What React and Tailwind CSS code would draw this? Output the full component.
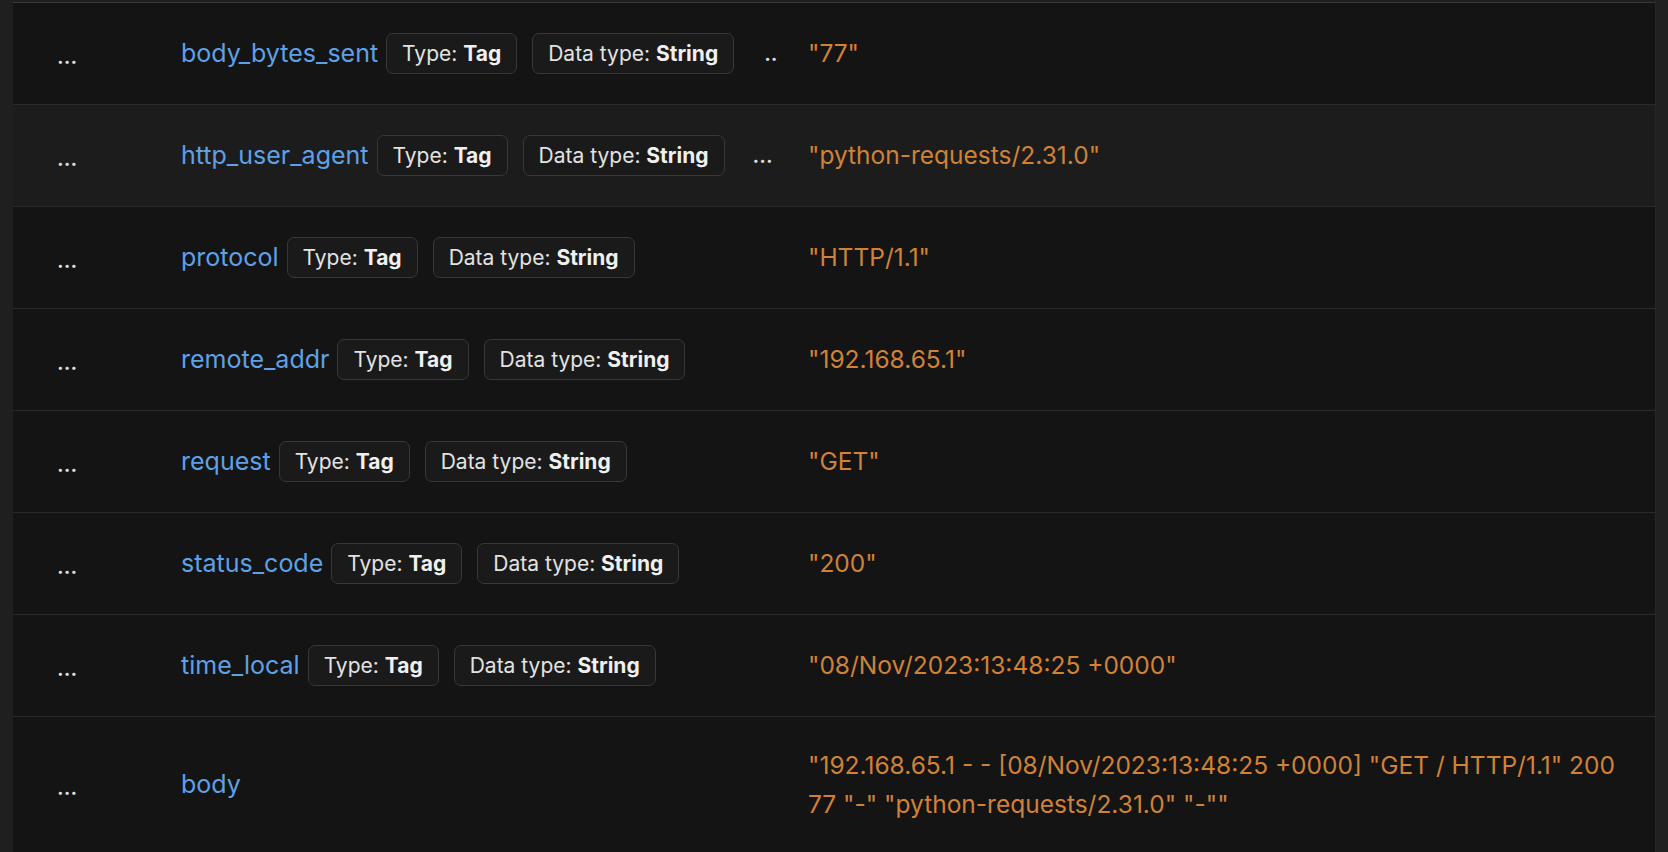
import React from 'react';

const ROWS = [
  { name: 'body_bytes_sent', value: '"77"', more: '..', moreGap: 'ml-[30px]' },
  { name: 'http_user_agent', value: '"python-requests/2.31.0"', more: '...', moreGap: 'ml-[28px]', active: true },
  { name: 'protocol', value: '"HTTP/1.1"' },
  { name: 'remote_addr', value: '"192.168.65.1"' },
  { name: 'request', value: '"GET"' },
  { name: 'status_code', value: '"200"' },
  { name: 'time_local', value: '"08/Nov/2023:13:48:25 +0000"' },
];

const BODY = '"192.168.65.1 - - [08/Nov/2023:13:48:25 +0000] "GET / HTTP/1.1" 200 77 "-" "python-requests/2.31.0" "-""';

const Badge = ({ label, value }) => (
  <span className="inline-flex items-center h-[41px] px-[15px] rounded-[7px] border border-[#383838] bg-[#1a1a1a] text-[21px] text-[#e2e2e2] whitespace-nowrap">
    {label}:&nbsp;<b className="font-bold text-[#f0f0f0]">{value}</b>
  </span>
);

const FieldRow = ({ name, value, more, moreGap, active, badges = true, tall }) => (
  <div
    className={`grid grid-cols-[168px_627px_1fr] items-center border-b border-[#2a2a2a] ${
      active ? 'bg-[#1c1c1c]' : 'bg-[#141414]'
    } ${tall ? 'h-[136px]' : 'h-[102px]'}`}
  >
    <div className="pl-[44px] pt-[6px] text-[21px] font-semibold text-[#dcdcdc]">...</div>
    <div className="flex items-center overflow-hidden whitespace-nowrap">
      <span className="text-[25px] text-[#5ea1e6] mr-[8px]">{name}</span>
      {badges && (
        <>
          <Badge label="Type" value="Tag" />
          <span className="ml-[15px]">
            <Badge label="Data type" value="String" />
          </span>
        </>
      )}
      {more && <span className={`${moreGap} text-[21px] font-semibold text-[#dcdcdc]`}>{more}</span>}
    </div>
    <div className={`pr-[24px] text-[24.5px] leading-[39px] text-[#d08236] ${tall ? 'max-w-[840px]' : ''}`}>{value}</div>
  </div>
);

export default function App() {
  return (
    <div className="flex h-[852px] overflow-hidden bg-[#1f1f1f] font-['Inter','Liberation_Sans',sans-serif]">
      <div className="w-[13px] shrink-0" />
      <div className="flex-1 pt-[2px]">
        <div className="border-t border-[#3a3a3a]">
          {ROWS.map((r) => (
            <FieldRow key={r.name} {...r} />
          ))}
          <FieldRow name="body" value={BODY} badges={false} tall />
        </div>
      </div>
      <div className="w-[13px] shrink-0 border-l border-[#262626] bg-[#212121]" />
    </div>
  );
}
